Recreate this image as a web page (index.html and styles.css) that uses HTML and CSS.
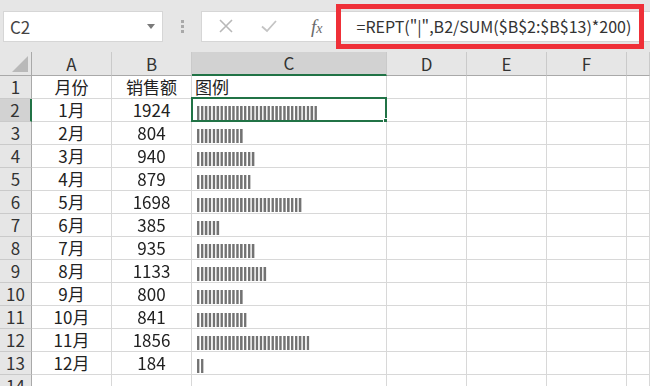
FILE: index.html
```html
<!DOCTYPE html>
<html lang="zh-CN">
<head>
    <meta charset="UTF-8">
    <meta name="viewport" content="width=device-width, initial-scale=1.0">
    <title>REPT 图例</title>
    <link rel="stylesheet" href="styles.css">
</head>
<body>
    <div class="toolbar">
        <div class="name-box">
            <span>C2</span>
            <svg class="drop" width="8" height="5" viewBox="0 0 8 5"><path d="M0 0h8L4 5z" fill="#7a7a7a"/></svg>
        </div>
        <div class="grip"><i></i><i></i><i></i></div>
        <div class="formula-box">
            <svg class="btn" width="16" height="16" viewBox="0 0 16 16"><path d="M2 2L14 14M14 2L2 14" stroke="#b8b8b8" stroke-width="1.6" fill="none"/></svg>
            <svg class="btn" width="18" height="16" viewBox="0 0 18 16"><path d="M2 8.5L7 13L16 3" stroke="#c4c4c4" stroke-width="1.8" fill="none"/></svg>
            <span class="fx">f<sub>x</sub></span>
            <div class="formula">=REPT("|",B2/SUM($B$2:$B$13)*200)</div>
            <!-- 빨간 강조 박스 -->
            <div class="mark"></div>
        </div>
    </div>

    <div class="sheet">
        <div class="hd corner"><svg width="16" height="16" viewBox="0 0 16 16"><path d="M16 0V16H0z" fill="#b9b9b9"/></svg></div>
        <div class="hd">A</div>
        <div class="hd">B</div>
        <div class="hd hd-on">C</div>
        <div class="hd">D</div>
        <div class="hd">E</div>
        <div class="hd">F</div>
        <div class="hd"></div>

        <div class="rh">1</div><div class="c mid">月份</div><div class="c mid">销售额</div><div class="c">图例</div><div class="c"></div><div class="c"></div><div class="c"></div><div class="c"></div>
        <div class="rh rh-on">2</div><div class="c mid">1月</div><div class="c mid">1924</div><div class="c sel"><span class="bar">|||||||||||||||||||||||||||||||</span><span class="selbox"><b></b></span></div><div class="c"></div><div class="c"></div><div class="c"></div><div class="c"></div>
        <div class="rh">3</div><div class="c mid">2月</div><div class="c mid">804</div><div class="c"><span class="bar">||||||||||||</span></div><div class="c"></div><div class="c"></div><div class="c"></div><div class="c"></div>
        <div class="rh">4</div><div class="c mid">3月</div><div class="c mid">940</div><div class="c"><span class="bar">|||||||||||||||</span></div><div class="c"></div><div class="c"></div><div class="c"></div><div class="c"></div>
        <div class="rh">5</div><div class="c mid">4月</div><div class="c mid">879</div><div class="c"><span class="bar">||||||||||||||</span></div><div class="c"></div><div class="c"></div><div class="c"></div><div class="c"></div>
        <div class="rh">6</div><div class="c mid">5月</div><div class="c mid">1698</div><div class="c"><span class="bar">|||||||||||||||||||||||||||</span></div><div class="c"></div><div class="c"></div><div class="c"></div><div class="c"></div>
        <div class="rh">7</div><div class="c mid">6月</div><div class="c mid">385</div><div class="c"><span class="bar">||||||</span></div><div class="c"></div><div class="c"></div><div class="c"></div><div class="c"></div>
        <div class="rh">8</div><div class="c mid">7月</div><div class="c mid">935</div><div class="c"><span class="bar">|||||||||||||||</span></div><div class="c"></div><div class="c"></div><div class="c"></div><div class="c"></div>
        <div class="rh">9</div><div class="c mid">8月</div><div class="c mid">1133</div><div class="c"><span class="bar">||||||||||||||||||</span></div><div class="c"></div><div class="c"></div><div class="c"></div><div class="c"></div>
        <div class="rh">10</div><div class="c mid">9月</div><div class="c mid">800</div><div class="c"><span class="bar">||||||||||||</span></div><div class="c"></div><div class="c"></div><div class="c"></div><div class="c"></div>
        <div class="rh">11</div><div class="c mid">10月</div><div class="c mid">841</div><div class="c"><span class="bar">|||||||||||||</span></div><div class="c"></div><div class="c"></div><div class="c"></div><div class="c"></div>
        <div class="rh">12</div><div class="c mid">11月</div><div class="c mid">1856</div><div class="c"><span class="bar">|||||||||||||||||||||||||||||</span></div><div class="c"></div><div class="c"></div><div class="c"></div><div class="c"></div>
        <div class="rh">13</div><div class="c mid">12月</div><div class="c mid">184</div><div class="c"><span class="bar">||</span></div><div class="c"></div><div class="c"></div><div class="c"></div><div class="c"></div>
        <div class="rh">14</div><div class="c"></div><div class="c"></div><div class="c"></div><div class="c"></div><div class="c"></div><div class="c"></div><div class="c"></div>
    </div>
</body>
</html>
```

FILE: styles.css
```css
*{margin:0; padding:0; box-sizing:border-box;}
html,body{height:100%;}
body{
    background-color:#e6e6e6;
    font-family:"Noto Sans CJK SC","Noto Sans",sans-serif;
    color:#222;
    overflow:hidden;
}

/* 수식 입력줄 */
.toolbar{
    display:flex; align-items:center;
    height:52px; padding-left:3px;
}
.name-box{
    display:flex; align-items:center; justify-content:space-between;
    width:160px; height:31px;
    padding:0 7px 0 6px;
    background-color:#fff;
    border:1px solid #d6d6d6;
    font-size:17px; color:#444;
}
.grip{
    display:flex; flex-direction:column; gap:2px;
    width:38px; align-items:center;
}
.grip i{display:block; width:3px; height:3px; background-color:#a9a9a9;}
.formula-box{
    position:relative;
    display:flex; align-items:center;
    flex:1; height:31px;
    background-color:#fff;
    border:1px solid #d6d6d6; border-right:0;
    padding-left:16px;
}
.btn{margin-right:26px;}
.btn + .btn{margin-right:33px;}
.fx{
    font-family:"Liberation Serif",serif; font-style:italic;
    font-size:19px; color:#6a6a6a; line-height:1;
}
.fx sub{font-size:14px; vertical-align:0;}
.formula{
    margin-left:34px;
    font-size:16px; color:#333;
    white-space:nowrap;
}
.mark{
    position:absolute; left:134px; top:-8px;
    width:308px; height:45px;
    border:5px solid #ef3038;
}

/* 시트 */
.sheet{
    display:grid;
    grid-template-columns:32px 80px 80px 195px 80px 80px 80px 1fr;
    grid-template-rows:24px;
    grid-auto-rows:23px;
    font-size:17px;
}
.hd{
    background-color:#e6e6e6;
    border-right:1px solid #cacaca;
    border-bottom:1px solid #a9a9a9;
    text-align:center; line-height:23px;
    font-size:17px; color:#333;
}
.corner{
    display:flex; align-items:flex-end; justify-content:flex-end;
    padding:0 3px 3px 0;
    border-right-color:#a9a9a9;
}
.hd-on{
    background-color:#d2d2d2;
    border-bottom:2px solid #217346;
    line-height:22px;
}
.rh{
    background-color:#e6e6e6;
    border-right:1px solid #a9a9a9;
    border-bottom:1px solid #cacaca;
    text-align:center; line-height:22px;
    color:#333;
}
.rh-on{
    background-color:#d2d2d2;
    border-right:2px solid #217346;
}
.c{
    position:relative;
    background-color:#fff;
    border-right:1px solid #d8d8d8;
    border-bottom:1px solid #d8d8d8;
    padding-left:3px;
    line-height:22px;
    white-space:nowrap;
}
.mid{text-align:center; padding-left:0;}
.bar{
    display:inline-block;
    margin-left:1px;
    font-family:"Liberation Sans",sans-serif; font-weight:bold;
    font-size:14px; line-height:25px;
    color:#737373;
    text-shadow:0.6px 0 0 #737373;
    transform:translateZ(0);
}
.selbox{
    position:absolute; left:-1px; top:-2px; right:-1px; bottom:-1px;
    border:2px solid #217346;
}
.selbox b{
    position:absolute; right:-4px; bottom:-4px;
    width:6px; height:6px;
    background-color:#217346;
    border:1px solid #fff;
}
```
